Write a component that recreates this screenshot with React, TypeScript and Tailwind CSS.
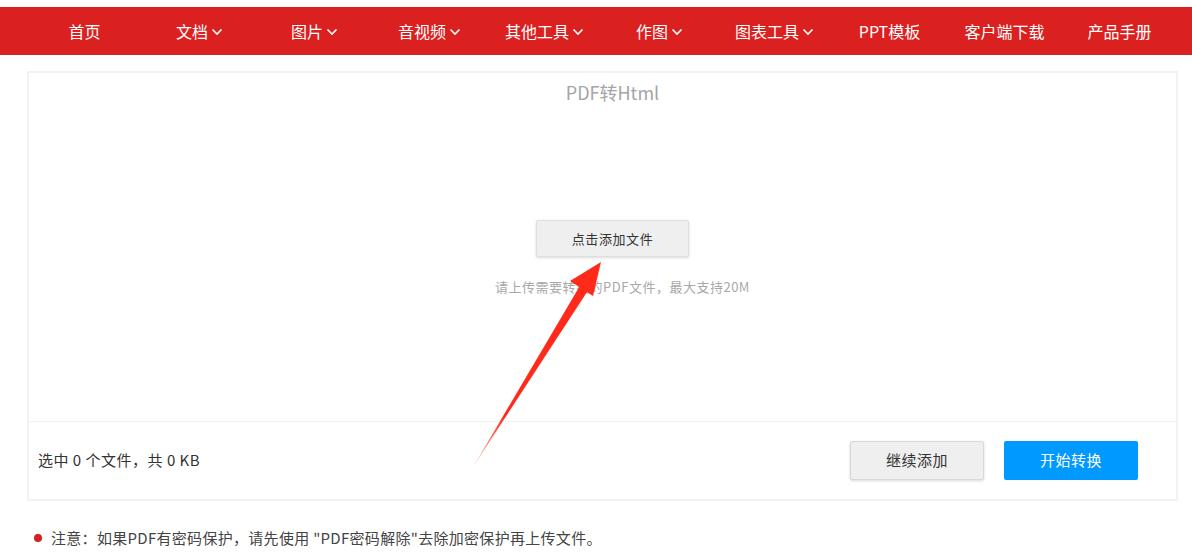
import React from "react";

const navItems = [
  { label: "首页", drop: false },
  { label: "文档", drop: true },
  { label: "图片", drop: true },
  { label: "音视频", drop: true },
  { label: "其他工具", drop: true },
  { label: "作图", drop: true },
  { label: "图表工具", drop: true },
  { label: "PPT模板", drop: false },
  { label: "客户端下载", drop: false },
  { label: "产品手册", drop: false },
];

const Chevron = () => (
  <svg width="12" height="8" viewBox="0 0 12 8" className="ml-[3px] mt-[1px]">
    <path d="M1.5 1.5 L6 6 L10.5 1.5" fill="none" stroke="white" strokeWidth="1.6" />
  </svg>
);

const App = () => {
  return (
    <div
      className="relative w-[1192px] h-[553px] bg-white overflow-hidden"
      style={{ fontFamily: "'Noto Sans CJK SC', 'Liberation Sans', sans-serif" }}
    >
      <nav className="mt-[7px] h-[48px] bg-[#db2020] flex items-center pl-[27px]">
        {navItems.map((item) => (
          <div
            key={item.label}
            className="w-[115px] flex items-center justify-center text-white text-[16px]"
          >
            <span>{item.label}</span>
            {item.drop && <Chevron />}
          </div>
        ))}
      </nav>

      <div className="mx-[27px] mt-[16px] w-[1151px] border-2 border-[#f2f2f2] flex flex-col">
        <div className="h-[348px] flex flex-col items-center pl-[20px]">
          <h2 className="mt-[7px] text-[18px] text-[#a5a5a5] leading-[24px]">PDF转Html</h2>
          <button className="mt-[116px] w-[153px] h-[37px] bg-[#efefef] border border-[#dedede] rounded-[2px] shadow-[0_1px_3px_rgba(0,0,0,0.15)] text-[13px] tracking-[0.6px] text-[#333]">
            点击添加文件
          </button>
          <p className="mt-[20px] ml-[20px] text-[13px] tracking-[0.5px] text-[#a8a8a8]">
            请上传需要转换的PDF文件，最大支持20M
          </p>
        </div>
        <div className="h-[78px] border-t border-[#f0f0f0] flex items-center px-[9px]">
          <span className="text-[15px] tracking-[0.5px] text-[#333]">选中 0 个文件，共 0 KB</span>
          <div className="ml-auto flex gap-[20px] mr-[29px]">
            <button className="w-[134px] h-[39px] bg-[#efefef] border border-[#d8d8d8] rounded-[2px] shadow-[0_1px_3px_rgba(0,0,0,0.15)] text-[15px] tracking-[0.5px] text-[#333]">
              继续添加
            </button>
            <button className="w-[134px] h-[39px] bg-[#0099ff] rounded-[2px] text-[15px] tracking-[0.5px] text-white">
              开始转换
            </button>
          </div>
        </div>
      </div>

      <div className="mt-[26px] ml-[34px] flex items-center text-[15px] tracking-[0.3px] text-[#444]">
        <span className="w-[8px] h-[8px] rounded-full bg-[#d91e1e] mr-[9px]" />
        <span>注意：如果PDF有密码保护，请先使用 "PDF密码解除"去除加密保护再上传文件。</span>
      </div>

      {/* annotation arrow */}
      <svg className="absolute left-0 top-0 pointer-events-none" width="1192" height="553">
        <defs>
          <linearGradient id="arrowFade" x1="473" y1="467" x2="600" y2="262" gradientUnits="userSpaceOnUse">
            <stop offset="0" stopColor="#ff2a1a" stopOpacity="0.2" />
            <stop offset="0.25" stopColor="#ff2a1a" />
            <stop offset="1" stopColor="#ff2a1a" />
          </linearGradient>
        </defs>
        <polygon points="473,467 581,284 589,289" fill="url(#arrowFade)" />
        <polygon points="601,262 570,281 593,296" fill="#ff2a1a" />
      </svg>
    </div>
  );
};

export default App;
